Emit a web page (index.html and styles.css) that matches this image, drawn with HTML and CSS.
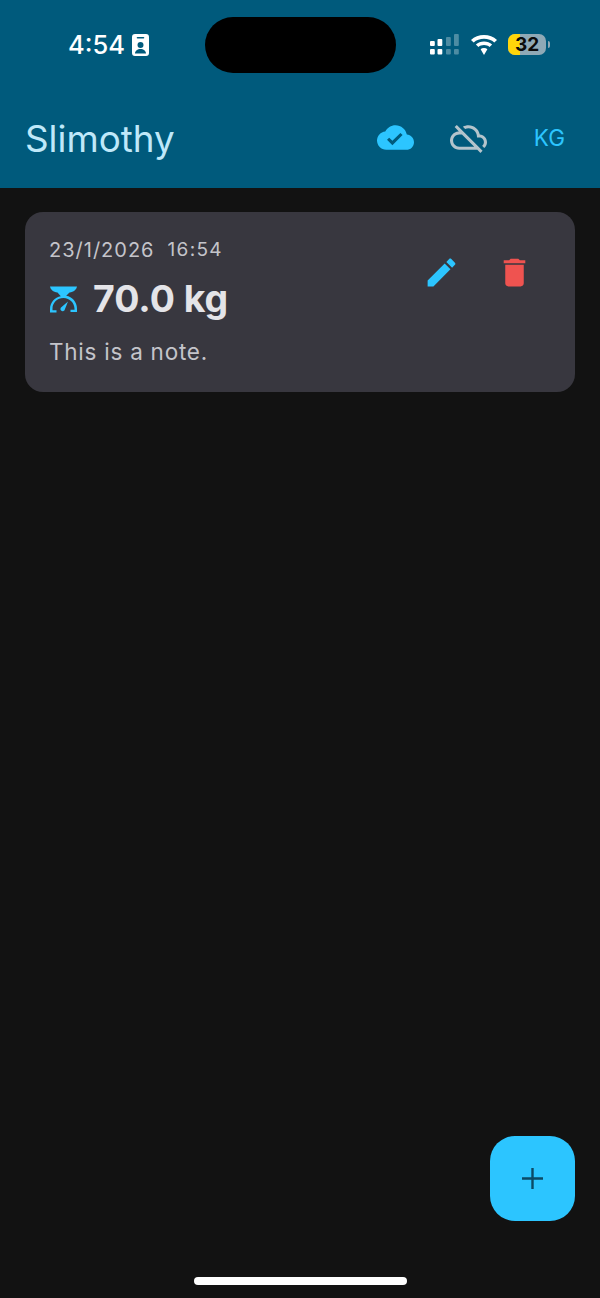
FILE: index.html
```html
<!DOCTYPE html>
<html lang="en">
<head>
  <meta charset="UTF-8">
  <meta name="viewport" content="width=device-width, initial-scale=1.0">
  <title>Slimothy</title>
  <link rel="stylesheet" href="styles.css">
</head>
<body>
  <header class="header">
    <div class="status-bar">
      <div class="status-left">
        <span class="clock">4:54</span>
        <svg class="id-icon" viewBox="0 0 17 22">
          <path fill="#fff" fill-rule="evenodd" d="M3 0h11a3 3 0 0 1 3 3v16a3 3 0 0 1-3 3H3a3 3 0 0 1-3-3V3a3 3 0 0 1 3-3zM5.500 3a.8.8 0 0 0 0 1.600h6a.8.8 0 0 0 0-1.600zM8.500 8a3 3 0 1 0 0 6 3 3 0 0 0 0-6zM3 19.500h11c0-2.500-2.500-4.500-5.500-4.500S3 17 3 19.500z"/>
        </svg>
      </div>
      <div class="status-right">
        <svg class="signal" viewBox="0 0 30 21">
          <g fill="#fff">
            <rect x="0" y="7" width="4.800" height="5" rx="1"/>
            <rect x="7.500" y="5" width="4.800" height="7" rx="1"/>
            <rect x="0" y="15" width="4.800" height="5.500" rx="1"/>
            <rect x="7.500" y="15" width="4.800" height="5.500" rx="1"/>
          </g>
          <g fill="#fff" opacity="0.3">
            <rect x="16" y="3" width="4.800" height="9" rx="1"/>
            <rect x="24" y="0" width="4.800" height="12" rx="1"/>
            <rect x="16" y="15" width="4.800" height="5.500" rx="1"/>
            <rect x="24" y="15" width="4.800" height="5.500" rx="1"/>
          </g>
        </svg>
        <svg class="wifi" viewBox="1.500 0 23 20" preserveAspectRatio="none">
          <path fill="#fff" d="M13 3.800c3.500 0 6.700 1.300 9.100 3.600l2.400-2.500C21.500 1.900 17.400 0 13 0S4.500 1.900 1.500 4.900l2.400 2.500C6.300 5.100 9.500 3.800 13 3.800zM13 10.100c1.900 0 3.600.7 4.900 1.900l2.300-2.500C18.300 7.700 15.800 6.600 13 6.600s-5.300 1.100-7.200 2.900l2.300 2.500c1.300-1.200 3-1.900 4.900-1.900zM13 13c-1.200 0-2.200.4-3 1.200l3 5.800 3-5.800c-.8-.8-1.800-1.200-3-1.200z"/>
        </svg>
        <div class="battery">
          <div class="battery-body">
            <div class="battery-fill"></div>
            <span class="battery-text">32</span>
          </div>
          <div class="battery-nub"></div>
        </div>
      </div>
    </div>
    <div class="island"></div>
    <div class="toolbar">
      <h1 class="title">Slimothy</h1>
      <div class="actions">
        <svg class="icon icon-synced" viewBox="0 0 24 24">
          <path d="M19.35 10.040C18.670 6.590 15.640 4 12 4 9.110 4 6.600 5.640 5.350 8.040 2.340 8.360 0 10.910 0 14c0 3.310 2.690 6 6 6h13c2.760 0 5-2.240 5-5 0-2.640-2.050-4.780-4.650-4.960zM10 17l-3.500-3.500 1.410-1.410L10 14.170 15.180 9l1.410 1.410L10 17z"/>
        </svg>
        <svg class="icon icon-offline" viewBox="0 0 24 24">
          <path d="M24 15c0-2.640-2.050-4.780-4.650-4.960C18.670 6.590 15.640 4 12 4c-1.330 0-2.570.36-3.650.97l1.490 1.490C10.510 6.170 11.230 6 12 6c3.040 0 5.500 2.460 5.500 5.500v.5H19c1.660 0 3 1.340 3 3 0 .99-.48 1.850-1.210 2.400l1.410 1.410c1.090-.92 1.800-2.270 1.800-3.810zM4.410 3.860L3 5.270l2.770 2.770h-.42C2.340 8.360 0 10.910 0 14c0 3.310 2.690 6 6 6h11.730l2 2 1.410-1.410L4.410 3.860zM6 18c-2.210 0-4-1.790-4-4s1.790-4 4-4h1.730l8 8H6z"/>
        </svg>
        <span class="unit">KG</span>
      </div>
    </div>
  </header>

  <main class="content">
    <article class="card">
      <div class="card-info">
        <div class="card-date">
          <span>23/1/2026</span>
          <span class="card-time">16:54</span>
        </div>
        <div class="card-weight">
          <svg class="scale-icon" viewBox="0 0 27 27">
            <path fill="#2cc5ff" d="M0 .5h27c-.5 3-3.200 5.500-7.500 5.900l-3.300 3.400c6 .9 10.800 6.400 10.800 13v3.200h-6.500v-2.200h4v-1c0-5.600-4.800-10.700-11-10.700S2.500 16.900 2.500 22.500v1.800h4v2.200H0v-3.200c0-6.600 4.800-12.100 10.800-13L7.500 6.400C3.200 6 .5 3.500 0 .5z"/>
            <path fill="#2cc5ff" d="M18 15.500l-3.200 7.900a2.200 2.200 0 1 1-3.200-2.300z"/>
          </svg>
          <span>70.0 kg</span>
        </div>
        <p class="card-note">This is a note.</p>
      </div>
      <div class="card-actions">
        <svg class="icon icon-edit" viewBox="0 0 24 24">
          <path d="M3 17.250V21h3.750L17.810 9.940l-3.750-3.750L3 17.250zM20.710 7.040c.39-.39.39-1.020 0-1.410l-2.340-2.340c-.39-.39-1.020-.39-1.410 0l-1.830 1.830 3.750 3.750 1.830-1.830z"/>
        </svg>
        <svg class="icon icon-delete" viewBox="0 0 24 24">
          <path d="M6 19c0 1.100.9 2 2 2h8c1.100 0 2-.9 2-2V7H6v12zM19 4h-3.500l-1-1h-5l-1 1H5v2h14V4z"/>
        </svg>
      </div>
    </article>
  </main>

  <button class="fab" aria-label="Add">
    <svg viewBox="0 0 21 21"><path d="M9.300 0h2.400v9.300H21v2.400h-9.300V21H9.300v-9.300H0V9.300h9.300z"/></svg>
  </button>
  <div class="home-indicator"></div>
</body>
</html>
```

FILE: styles.css
```css
* {
  box-sizing: border-box;
}
body {
  position: relative;
  width: 600px;
  height: 1298px;
  margin: 0;
  overflow: hidden;
  background: #121212;
  color: #e4e4e8;
  font-family: Inter, "Noto Sans", sans-serif;
}
.header {
  position: relative;
  height: 188px;
  background: #005a7c;
}
.status-bar {
  display: flex;
  justify-content: space-between;
  align-items: center;
  height: 89px;
  padding: 0 50px 0 68px;
}
.status-left {
  display: flex;
  align-items: center;
  gap: 7px;
}
.clock {
  color: #fff;
  font-size: 25.5px;
  font-weight: 500;
}
.id-icon {
  width: 17px;
  height: 22px;
}
.status-right {
  display: flex;
  align-items: center;
  gap: 11px;
}
.signal {
  width: 30px;
  height: 21px;
}
.wifi {
  width: 26px;
  height: 20px;
}
.battery {
  display: flex;
  align-items: center;
  gap: 2px;
}
.battery-body {
  position: relative;
  display: flex;
  justify-content: center;
  align-items: center;
  width: 38px;
  height: 21px;
  overflow: hidden;
  border-radius: 7px;
  background: #8fa9b6;
}
.battery-fill {
  position: absolute;
  top: 0;
  bottom: 0;
  left: 0;
  width: 12px;
  background: #ffd60a;
}
.battery-text {
  position: relative;
  color: #0b0b0b;
  font-size: 19px;
  font-weight: 700;
}
.battery-nub {
  width: 2px;
  height: 7px;
  border-radius: 0 2px 2px 0;
  background: #8fa9b6;
}
.island {
  position: absolute;
  top: 17px;
  left: 205px;
  width: 191px;
  height: 56px;
  border-radius: 28px;
  background: #000;
}
.toolbar {
  display: flex;
  justify-content: space-between;
  align-items: center;
  height: 99px;
  padding: 0 35px 2px 25px;
}
.title {
  margin: 2px 0 0;
  color: #bfe8f9;
  font-size: 36.8px;
  font-weight: 400;
}
.actions {
  display: flex;
  align-items: center;
  gap: 36px;
}
.icon {
  display: block;
  width: 37px;
  height: 37px;
}
.icon-synced {
  fill: #2cc5ff;
}
.icon-offline {
  fill: #b4c4cc;
}
.unit {
  margin-left: 11px;
  color: #2cc5ff;
  font-size: 22.5px;
}
.content {
  padding: 24px 25px;
}
.card {
  display: flex;
  justify-content: space-between;
  height: 180px;
  padding: 26px 42px 0 24px;
  border-radius: 18px;
  background: #38373f;
}
.card-date {
  display: flex;
  gap: 13px;
  color: #c4c4ca;
  font-size: 20px;
  letter-spacing: 1px;
}
.card-time {
  font-size: 19px;
  letter-spacing: 1.3px;
}
.card-weight {
  display: flex;
  align-items: center;
  gap: 16px;
  margin-top: 14px;
  padding-left: 1px;
  font-size: 37.4px;
  font-weight: 700;
}
.scale-icon {
  width: 27px;
  height: 27px;
  margin-top: 2px;
}
.card-note {
  margin: 17px 0 0;
  color: #c4c4ca;
  font-size: 22.5px;
  letter-spacing: 0.75px;
}
.card-actions {
  display: flex;
  gap: 36px;
  margin-top: 16px;
}
.icon-edit {
  fill: #2cc5ff;
}
.icon-delete {
  fill: #ef5350;
}
.fab {
  position: absolute;
  top: 1136px;
  left: 490px;
  display: flex;
  justify-content: center;
  align-items: center;
  width: 85px;
  height: 85px;
  padding: 0;
  border: none;
  border-radius: 25px;
  background: #2cc5ff;
}
.fab svg {
  width: 21px;
  height: 21px;
  fill: #0b4a66;
}
.home-indicator {
  position: absolute;
  top: 1277px;
  left: 194px;
  width: 213px;
  height: 8px;
  border-radius: 4px;
  background: #fff;
}
```
